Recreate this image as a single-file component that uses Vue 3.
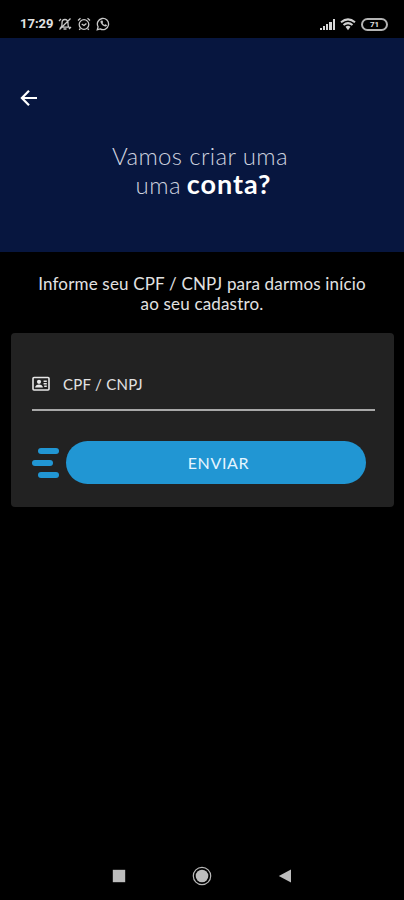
<script setup>
import { ref } from 'vue'

const clock = ref('17:29')
const battery = ref(71)
const signalBars = [2, 4, 6, 8, 11]
</script>

<template>
  <main class="screen">
    <div class="status">
      <span class="clock">{{ clock }}</span>
      <svg class="status-icon" width="14" height="14" viewBox="0 0 14 14">
        <path d="M3 10.2h8c-1.2-1.2-1-2.500-1-4.200 0-2.400-1.300-3.500-3-3.500S4 3.600 4 6c0 1.700.2 3-1 4.200zM5.500 12h3M1.500 12.500l11-11M1 4l2-2M11 12l2-2" />
      </svg>
      <svg class="status-icon" width="14" height="14" viewBox="0 0 14 14">
        <circle cx="7" cy="7.500" r="4.800" />
        <path d="M4.700 7l2.300 1.500L9.400 6.500M1 3.500L3.500 1.300M13 3.500L10.500 1.300M3.400 11.500l-1.200 1.400M10.600 11.500l1.200 1.400" />
      </svg>
      <svg class="status-icon" width="14" height="14" viewBox="0 0 14 14">
        <path d="M1.300 12.700l.8-2.900A5.600 5.600 0 1 1 4.200 11.900z" />
        <path class="handset" d="M4.700 3.800c-1.200 1.900 2.600 6.200 5.200 5.700.9-.2 1.200-1 1-1.500L9.200 7.200l-.9.8C7.500 7.600 6.900 6.900 6.500 6.100l.6-.8-.6-1.700z" />
      </svg>
      <div class="status-right">
        <span class="signal">
          <i v-for="h in signalBars" :key="h" :style="{ height: h + 'px' }"></i>
        </span>
        <svg width="16" height="13" viewBox="0 0 16 13" class="wifi">
          <path d="M1 4.300Q8-1.500 15 4.300M3.500 7Q8 3.300 12.500 7" />
          <path class="wifi-core" d="M5.500 8.700Q8 6.800 10.500 8.700L8 12.200z" />
        </svg>
        <span class="battery">{{ battery }}</span>
      </div>
    </div>

    <header class="hero">
      <button class="back" aria-label="Voltar">
        <svg width="18" height="18" viewBox="0 0 18 18"><path d="M17 9H2M9 1.800L1.900 9 9 16.200" /></svg>
      </button>
      <h1>
        <span class="line-one">Vamos criar uma</span>
        <span class="line-two">uma <strong>conta?</strong></span>
      </h1>
    </header>

    <p class="intro">Informe seu CPF / CNPJ para darmos início<br />ao seu cadastro.</p>

    <form class="card" @submit.prevent>
      <label class="field">
        <svg width="18" height="16" viewBox="0 0 18 16">
          <path fill="none" stroke="#e8e8e8" stroke-width="1.600" d="M2 1.500h14q1 0 1 1v10.500q0 1-1 1H2q-1 0-1-1V2.500q0-1 1-1z" />
          <circle cx="7" cy="5.800" r="2.100" />
          <path d="M3.200 11.500V10.700Q4.200 8.500 7 8.500T10.800 10.700v.8zM11.600 4.500h3.200v1.400h-3.200zM11.600 7h3.200v1.400h-3.200zM12.200 9.500h2.600v1.400h-2.600z" />
        </svg>
        <span>CPF / CNPJ</span>
      </label>
      <div class="actions">
        <span class="dashes"><i></i><i></i><i></i></span>
        <button class="send">ENVIAR</button>
      </div>
    </form>

    <nav class="system-nav">
      <svg width="14" height="14" viewBox="0 0 14 14"><path d="M.8.8h12.400v12.400H.8z" /></svg>
      <svg width="20" height="20" viewBox="0 0 20 20"><circle cx="10" cy="10" r="8.700" fill="none" stroke="#b8b8b8" stroke-width="1.200" /><circle cx="10" cy="10" r="6.300" /></svg>
      <svg width="14" height="14" viewBox="0 0 14 14"><path d="M.8 7L13 .5v13z" /></svg>
    </nav>
  </main>
</template>

<style>
body { background: #000; }
</style>

<style scoped>
.screen {
  display: flex;
  flex-direction: column;
  box-sizing: border-box;
  height: 900px;
  overflow: hidden;
  background: #000;
  font-family: Lato, "Liberation Sans", sans-serif;
  color: #e2e2e2;
}
button { border: 0; padding: 0; font: inherit; color: inherit; background: none; }
.status {
  display: flex;
  align-items: center;
  height: 28px;
  padding: 10px 16px 0 20px;
}
.clock {
  width: 33px;
  margin-right: 5px;
  font: 700 13px/16px Roboto, sans-serif;
  white-space: nowrap;
}
.status-icon {
  margin-right: 5px;
  fill: none;
  stroke: #c9c9c9;
  stroke-width: 1.300;
}
.status-icon .handset { fill: #c9c9c9; stroke: none; }
.status-right { display: flex; align-items: center; margin-left: auto; }
.signal { display: flex; align-items: flex-end; gap: 1px; height: 12px; margin-right: 5px; }
.signal i { width: 2.300px; background: #d8d8d8; }
.wifi { margin-right: 5px; fill: none; stroke: #d0d0d0; stroke-width: 2; }
.wifi .wifi-core { fill: #d0d0d0; stroke: none; }
.battery {
  box-sizing: border-box;
  width: 27px;
  height: 13px;
  border: 2px solid #b4b4b4;
  border-radius: 7px;
  font: 700 8px/9px Roboto, sans-serif;
  text-align: center;
}
.hero { height: 214px; background: #07163f; box-sizing: border-box; padding-top: 51px; }
.back { display: block; width: 18px; height: 18px; margin-left: 20px; }
.back svg { display: block; fill: none; stroke: #fff; stroke-width: 2.200; }
h1 {
  margin: 34px 0 0;
  font-size: 24px;
  font-weight: 300;
  line-height: 29px;
  text-align: center;
  color: #ced2df;
}
h1 span { display: block; }
.line-one { padding-right: 4px; letter-spacing: .36px; }
.line-two { padding-left: 3px; letter-spacing: .4px; }
h1 strong { font-weight: 700; font-size: 27px; line-height: 20px; letter-spacing: .95px; margin-left: -1px; color: #fff; }
.intro { margin: 22px 0 20px; font-size: 17px; line-height: 19.500px; letter-spacing: .17px; text-align: center; }
.card {
  box-sizing: border-box;
  width: 383px;
  height: 174px;
  margin-left: 11px;
  padding: 42px 19px 0 21px;
  border-radius: 4px;
  background: #222;
}
.field {
  display: flex;
  align-items: center;
  gap: 13px;
  height: 18px;
  padding-bottom: 16px;
  border-bottom: 2px solid #a8a8a8;
  font-size: 15px;
  letter-spacing: .27px;
}
.field svg { fill: #e8e8e8; }
.actions { display: flex; align-items: center; margin-top: 30px; }
.dashes { display: flex; flex-direction: column; gap: 6px; width: 27px; margin-right: 7px; }
.dashes i { width: 21px; height: 6px; border-radius: 3px; margin-left: 6px; background: #2196d3; }
.dashes i:nth-child(2) { margin-left: 0; }
.send { width: 300px; height: 43px; padding-left: 5px; border-radius: 22px; background: #2196d3; color: #e5f5ff; font-size: 16px; letter-spacing: .65px; }
.system-nav {
  display: flex;
  align-items: center;
  justify-content: space-between;
  width: 180px;
  height: 20px;
  margin: auto 0 14px 112px;
  fill: #bdbdbd;
}
</style>
